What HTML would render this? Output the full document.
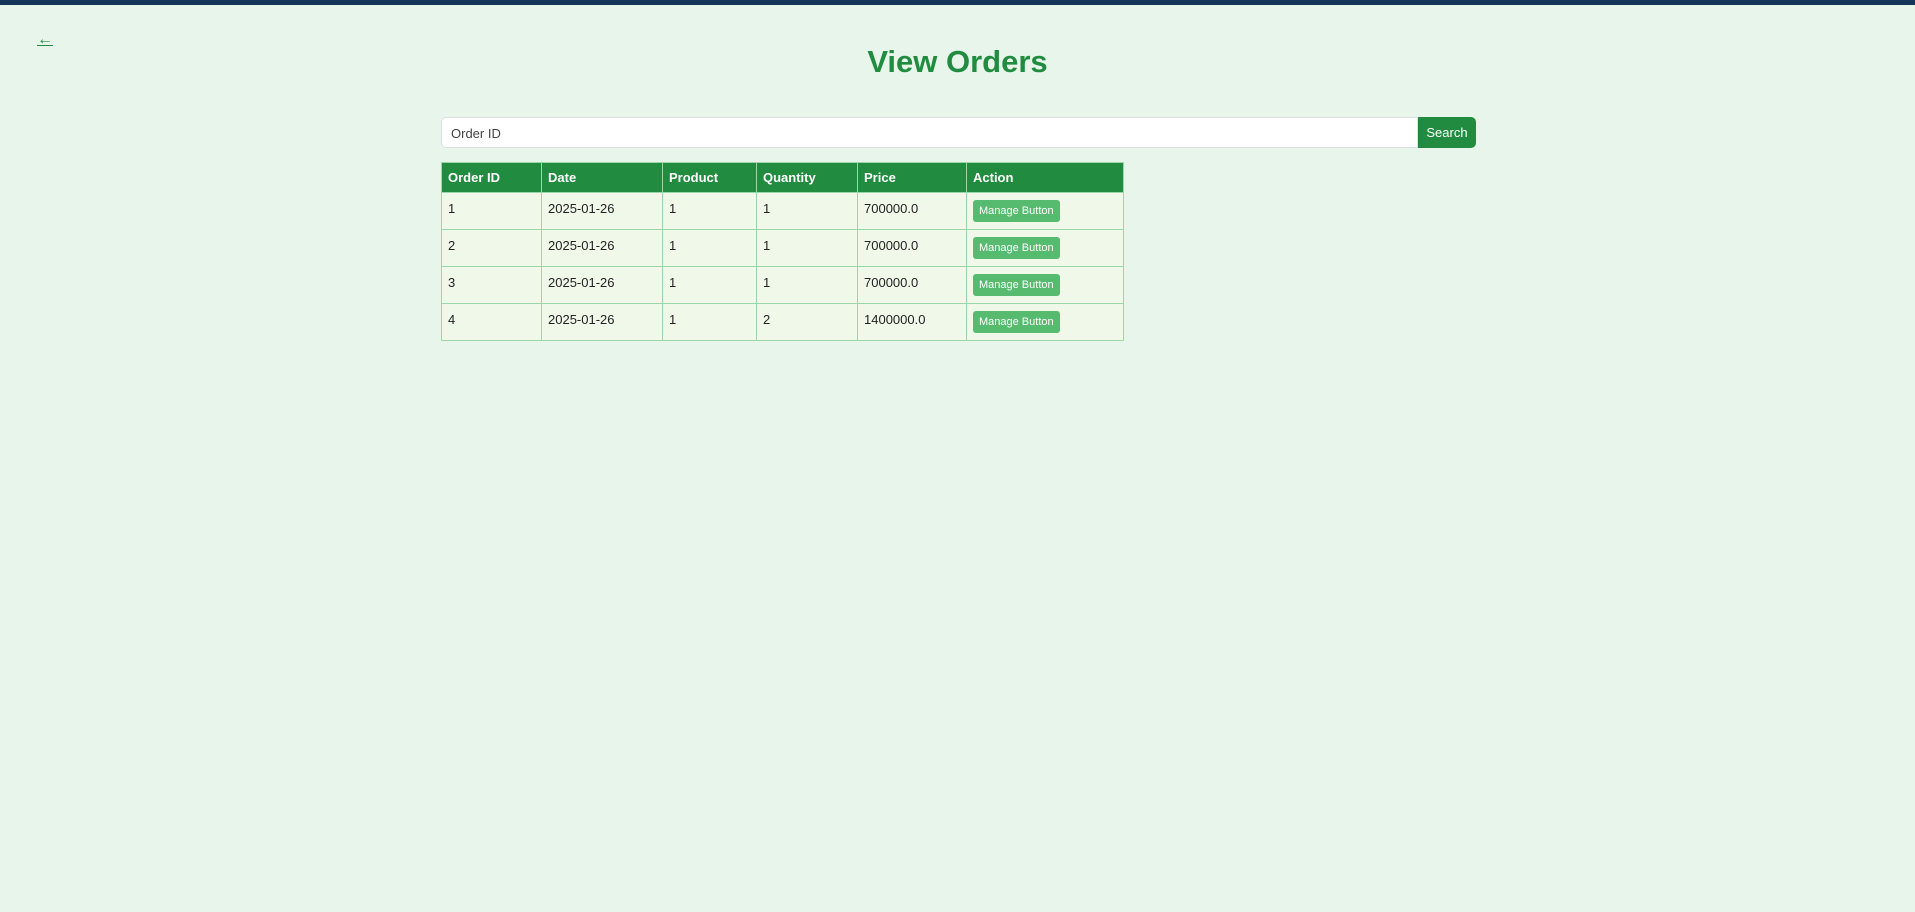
<!DOCTYPE html>
<html><head><meta charset="utf-8"><style>
*{box-sizing:border-box;margin:0;padding:0}
body{width:1915px;height:912px;background:#e7f5ea;font-family:"Liberation Sans",sans-serif;position:relative;overflow:hidden}
.bar{position:absolute;left:0;top:0;width:1915px;height:5px;background:#15355a}
.back{position:absolute;left:37px;top:30px;color:#218c3f;font-size:16px;text-decoration:underline;line-height:20px}
h1{position:absolute;left:0;width:1915px;top:44px;text-align:center;color:#218c3f;font-size:31px;font-weight:bold}
.inp{position:absolute;left:441px;top:117px;width:977px;height:31px;background:#fff;border:1px solid #dcdfe0;border-radius:5px 0 0 5px;font-size:13px;color:#444;padding:8px 9px}
.btn{position:absolute;left:1418px;top:117px;width:58px;height:31px;background:#218c3f;color:#fff;border-radius:0 5px 5px 0;font-size:13px;text-align:center;line-height:31px}
table{position:absolute;left:441px;top:162px;width:683px;border-collapse:collapse;font-size:13px}
th,td{border:1px solid #9dd6a8;text-align:left;padding:0 6px}
th{background:#218c3f;color:#fff;height:30px;font-weight:bold}
td{background:#f0f8ea;color:#222;height:37px;padding-bottom:5px}
td:last-child{padding-bottom:0}
.m{display:inline-block;background:#56bb6f;color:#fff;font-size:11px;padding:0 6px;height:22px;line-height:22px;border-radius:3px}
</style></head><body>
<div class="bar"></div>
<div class="back">←</div>
<h1>View Orders</h1>
<div class="inp">Order ID</div>
<div class="btn">Search</div>
<table>
<tr><th style="width:100px">Order ID</th><th style="width:121px">Date</th><th style="width:94px">Product</th><th style="width:101px">Quantity</th><th style="width:109px">Price</th><th>Action</th></tr>
<tr><td>1</td><td>2025-01-26</td><td>1</td><td>1</td><td>700000.0</td><td><span class="m">Manage Button</span></td></tr>
<tr><td>2</td><td>2025-01-26</td><td>1</td><td>1</td><td>700000.0</td><td><span class="m">Manage Button</span></td></tr>
<tr><td>3</td><td>2025-01-26</td><td>1</td><td>1</td><td>700000.0</td><td><span class="m">Manage Button</span></td></tr>
<tr><td>4</td><td>2025-01-26</td><td>1</td><td>2</td><td>1400000.0</td><td><span class="m">Manage Button</span></td></tr>
</table>
</body></html>
